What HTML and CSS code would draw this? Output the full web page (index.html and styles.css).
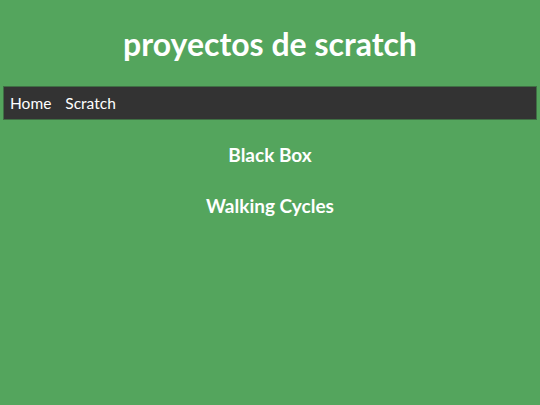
FILE: index.html
```html
<!DOCTYPE html>
<html lang="es">
<head>
<meta charset="utf-8">
<title>proyectos de scratch</title>
<link rel="stylesheet" href="styles.css">
</head>
<body>
<header class="site-header">
  <h1 class="site-title">proyectos de scratch</h1>
</header>
<nav class="topnav">
  <a class="nav-link" href="#">Home</a>
  <a class="nav-link" href="#">Scratch</a>
</nav>
<main class="projects">
  <h2 class="project"><a href="#">Black Box</a></h2>
  <h2 class="project"><a href="#">Walking Cycles</a></h2>
</main>
</body>
</html>
```
FILE: styles.css
```css
html, body {
  margin: 0;
  padding: 0;
}
body {
  background: #54a55d;
  color: #fff;
  font-family: Lato, "Noto Sans", sans-serif;
  padding: 0 3px;
  height: 405px;
  box-sizing: border-box;
}
a {
  color: #fff;
  text-decoration: none;
}
.site-header {
  display: flex;
  justify-content: center;
  padding-top: 24px;
  height: 86px;
  box-sizing: border-box;
}
.site-title {
  margin: 0;
  font-size: 32px;
  font-weight: 700;
  line-height: 40px;
}
.topnav {
  background: #333333;
  height: 34px;
  display: flex;
  align-items: center;
  gap: 14px;
  padding-left: 6px;
  border: 1px solid #3f6f44;
  box-sizing: border-box;
}
.nav-link {
  font-size: 15.5px;
}
.projects {
  display: flex;
  flex-direction: column;
  align-items: center;
  gap: 27px;
  padding-top: 23px;
}
.project {
  margin: 0;
  font-size: 19px;
  font-weight: 700;
  line-height: 24px;
}
```
